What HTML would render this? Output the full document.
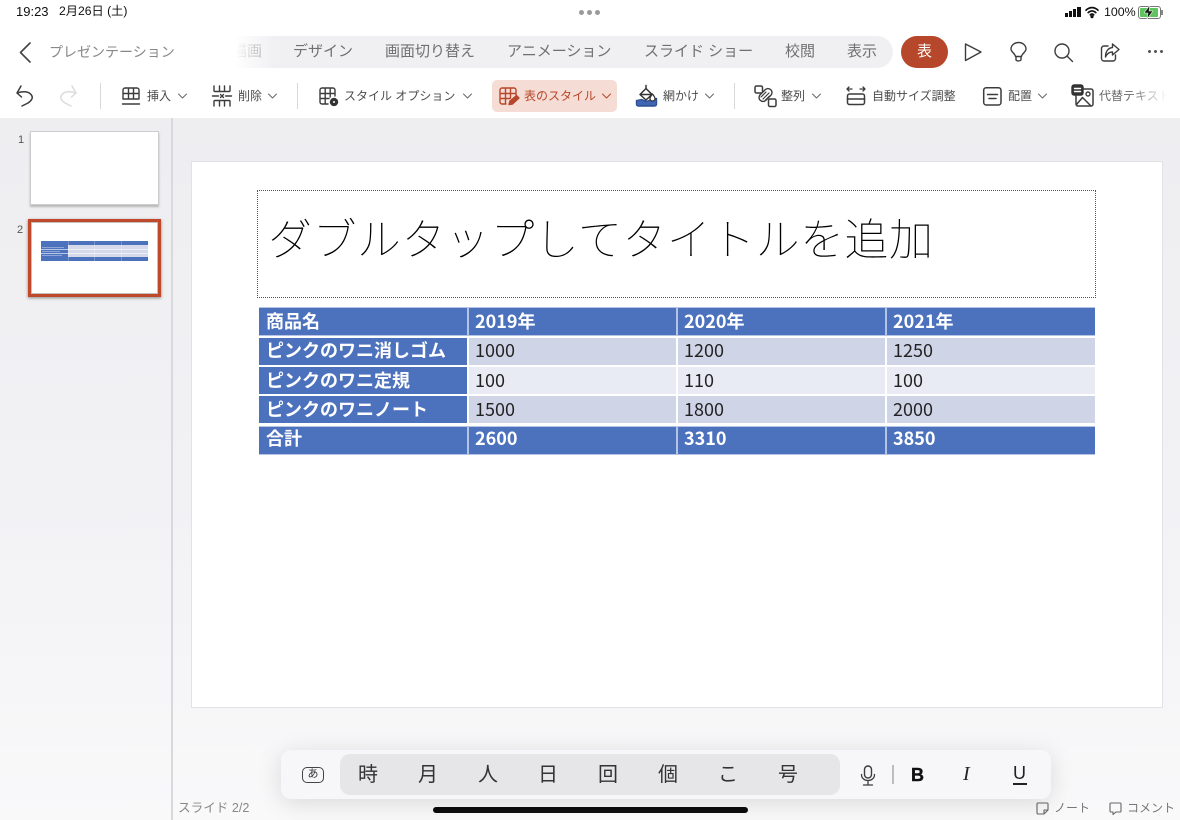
<!DOCTYPE html>
<html lang="ja"><head><meta charset="utf-8">
<style>
html,body{margin:0;padding:0}
body{width:1180px;height:820px;overflow:hidden;position:relative;background:linear-gradient(180deg,#fff 0,#fff 118px,#eeeef1 118px,#f2f2f5 500px,#f9f9fa 820px);font-family:"Liberation Sans","Noto Sans CJK JP",sans-serif;color:#333}
.a{position:absolute;white-space:nowrap}
svg{position:absolute;overflow:visible;fill:none;stroke:#3c3c3c;stroke-width:1.4;stroke-linecap:round;stroke-linejoin:round}
.tab{position:absolute;top:43px;font-size:15px;line-height:18px;color:#707070;white-space:nowrap}
.tb{position:absolute;top:88px;font-size:12px;line-height:16px;color:#4c4c4c;white-space:nowrap}
.c{position:absolute;height:27px;line-height:27px;font-size:18px;box-sizing:border-box;padding-left:7px;white-space:nowrap;font-family:"Noto Sans CJK JP","Liberation Sans",sans-serif}
.h{background:#4d72bd;color:#fff;font-weight:700}
.d1{background:#cfd4e7;color:#222}
.d2{background:#e8ebf4;color:#222}
.r2{line-height:25px}
.r4{line-height:26px}
.r5{line-height:23px}
.k{position:absolute;top:762px;font-size:20px;line-height:26px;color:#333;width:30px;text-align:center}
</style></head><body>

<div class="a" style="left:16px;top:3px;font-size:13px;line-height:17px;color:#111">19:23</div>
<div class="a" style="left:59px;top:3px;font-size:12.2px;line-height:17px;color:#111">2月26日 (土)</div>
<div class="a" style="left:579px;top:10px;width:5px;height:5px;border-radius:50%;background:#9a9a9a"></div>
<div class="a" style="left:587px;top:10px;width:5px;height:5px;border-radius:50%;background:#9a9a9a"></div>
<div class="a" style="left:595px;top:10px;width:5px;height:5px;border-radius:50%;background:#9a9a9a"></div>
<div class="a" style="left:1065px;top:13px;width:3px;height:4px;background:#111"></div>
<div class="a" style="left:1069px;top:11px;width:3px;height:6px;background:#111"></div>
<div class="a" style="left:1073px;top:9px;width:3px;height:8px;background:#111"></div>
<div class="a" style="left:1077px;top:7px;width:4px;height:10px;background:#111"></div>
<svg style="left:1085px;top:6px" width="14" height="12" viewBox="0 0 14 12"><path d="M1 4.200C4.500.8 9.500.8 13 4.200M3.200 6.600c2.400-2.200 5.200-2.200 7.600 0M5.300 8.800c1.100-1 2.300-1 3.400 0" stroke="#111" stroke-width="1.700"/><circle cx="7" cy="10.600" r=".9" fill="#111" stroke="#111"/></svg>
<div class="a" style="left:1104px;top:4px;font-size:12.4px;line-height:16px;color:#111">100%</div>
<div class="a" style="left:1138px;top:6px;width:21px;height:11px;border:1px solid #777;border-radius:3px"></div>
<div class="a" style="left:1140px;top:8px;width:18px;height:9px;background:#5fc45f;border-radius:1px"></div>
<div class="a" style="left:1161px;top:10px;width:2px;height:5px;background:#888"></div>
<svg style="left:1143px;top:5px" width="11" height="14" viewBox="0 0 11 14"><path d="M7 0L1 8h4l-1 6 6-8H6z" fill="#111" stroke="#fff" stroke-width=".6"/></svg>

<svg style="left:18px;top:42px" width="14" height="21" viewBox="0 0 14 21"><path d="M12 1L2.500 10.500 12 20" stroke="#444" stroke-width="1.600"/></svg>
<div class="a" style="left:49px;top:43px;font-size:14px;line-height:18px;color:#888">プレゼンテーション</div>

<div class="a" style="left:232px;top:36px;width:661px;height:32px;border-radius:0 16px 16px 0;background:#f0f0f3"></div>
<div class="tab" style="left:232px;color:#999">描画</div>
<div class="a" style="left:225px;top:36px;width:50px;height:32px;background:linear-gradient(90deg,#fff 0,#fff 20%,rgba(255,255,255,0) 100%)"></div>
<div class="tab" style="left:293px">デザイン</div>
<div class="tab" style="left:385px">画面切り替え</div>
<div class="tab" style="left:507px">アニメーション</div>
<div class="tab" style="left:644px">スライド ショー</div>
<div class="tab" style="left:785px">校閲</div>
<div class="tab" style="left:847px">表示</div>
<div class="a" style="left:901px;top:36px;width:47px;height:32px;border-radius:16px;background:#b7472a;color:#fff;font-size:15px;line-height:32px;text-align:center">表</div>

<svg style="left:964px;top:43px" width="18" height="18" viewBox="0 0 18 18"><path d="M1.500 1L17 9 1.500 17.500z" stroke-width="1.400"/></svg>
<svg style="left:1010px;top:42px" width="17" height="20" viewBox="0 0 17 20"><path d="M5.500 14.500C5 11.500 1 10 1 7a7.500 6.500 0 0 1 15 0c0 3-4 4.500-4.500 7.500zM5.500 14.500h6M6 18c1 1.300 4 1.300 5 0v-3.500M6 18v-3.500" stroke-width="1.400"/></svg>
<svg style="left:1054px;top:43px" width="19" height="19" viewBox="0 0 19 19"><circle cx="8" cy="8" r="7" stroke-width="1.400"/><path d="M13 13l5.500 5.500" stroke-width="1.400"/></svg>
<svg style="left:1100px;top:42px" width="20" height="20" viewBox="0 0 20 20"><path d="M8 4H4a2.500 2.500 0 0 0-2.500 2.500v10A2.500 2.500 0 0 0 4 19h9a2.500 2.500 0 0 0 2.500-2.500V13" stroke-width="1.400"/><path d="M12.500 2L19 7.500 12.500 13v-3C9 10 7 11.500 5.500 15c0-5.500 2.500-9 7-9.500z" stroke-width="1.400"/></svg>
<div class="a" style="left:1148px;top:50px;width:3px;height:3px;border-radius:50%;background:#555"></div>
<div class="a" style="left:1154px;top:50px;width:3px;height:3px;border-radius:50%;background:#555"></div>
<div class="a" style="left:1160px;top:50px;width:3px;height:3px;border-radius:50%;background:#555"></div>

<svg style="left:14px;top:85px" width="20" height="22" viewBox="0 0 20 22"><path d="M7 1L3 8l4.500 4M3 8C8 6.500 14 6 17 9.500 20 13 17 16 14 18L8 21" stroke-width="1.500"/></svg>
<svg style="left:59px;top:85px" width="20" height="22" viewBox="0 0 20 22"><path d="M13 1l4 7-4.500 4M17 8C12 6.500 6 6 3 9.500 0 13 3 16 6 18l6 3" stroke="#dcdcdc" stroke-width="1.500"/></svg>
<div class="a" style="left:100px;top:83px;width:1px;height:26px;background:#d8d8d8"></div>

<svg style="left:122px;top:87px" width="18" height="18" viewBox="0 0 18 18"><path d="M1 12V3a2 2 0 0 1 2-2h12a2 2 0 0 1 2 2v9zM1 6.500h16M6.500 1v11M11.500 1v11M0.500 17h17"/></svg>
<div class="tb" style="left:147px">挿入</div>
<svg style="left:178px;top:93px" width="9" height="6" viewBox="0 0 9 6"><path d="M.5 1l4 4 4-4" stroke="#666" stroke-width="1"/></svg>

<svg style="left:212px;top:86px" width="20" height="20" viewBox="0 0 20 20"><path d="M2 0v4.500a1 1 0 0 0 1 1h14a1 1 0 0 0 1-1V0M7.500 0v5.500M12.500 0v5.500M0.500 10h6M13.500 10h6M8.500 8.500l3 3M11.500 8.500l-3 3M2 20v-4.500a1 1 0 0 1 1-1h14a1 1 0 0 1 1 1V20M7.500 14.500V20M12.500 14.500V20"/></svg>
<div class="tb" style="left:238px">削除</div>
<svg style="left:268px;top:93px" width="9" height="6" viewBox="0 0 9 6"><path d="M.5 1l4 4 4-4" stroke="#666" stroke-width="1"/></svg>
<div class="a" style="left:297px;top:83px;width:1px;height:26px;background:#d8d8d8"></div>

<svg style="left:319px;top:87px" width="20" height="20" viewBox="0 0 20 20"><path d="M9 17H3a2 2 0 0 1-2-2V3a2 2 0 0 1 2-2h11a2 2 0 0 1 2 2v6M1 6.500h15M1 11.500h9M6.200 1v16M11.200 1v9"/><circle cx="15" cy="15" r="3" fill="#333" stroke="#333" stroke-width="2.400" stroke-dasharray="1.500 1.200"/><circle cx="15" cy="15" r="1" fill="#fff" stroke="none"/></svg>
<div class="tb" style="left:344px">スタイル オプション</div>
<svg style="left:463px;top:93px" width="9" height="6" viewBox="0 0 9 6"><path d="M.5 1l4 4 4-4" stroke="#666" stroke-width="1"/></svg>

<div class="a" style="left:492px;top:80px;width:125px;height:32px;border-radius:5px;background:#f5dcd4"></div>
<svg style="left:499px;top:87px" width="21" height="19" viewBox="0 0 21 19"><path d="M7 17H3a2 2 0 0 1-2-2V3a2 2 0 0 1 2-2h12a2 2 0 0 1 2 2v5M1 6.500h16M1 11.500h10M6.500 1v16M11.500 1v10" stroke="#b7472a"/><path d="M10 17.500l1-3.500 6.500-5.500 2.500 2.500-6.500 6z" fill="#b7472a" stroke="#b7472a"/></svg>
<div class="tb" style="left:524px;color:#b7472a">表のスタイル</div>
<svg style="left:602px;top:93px" width="9" height="6" viewBox="0 0 9 6"><path d="M.5 1l4 4 4-4" stroke="#b7472a" stroke-width="1"/></svg>

<svg style="left:636px;top:84px" width="21" height="23" viewBox="0 0 21 23"><path d="M.5 20.500a2 2 0 0 0 2 1.500h16a2 2 0 0 0 2-1.500v-6l-5 1-5 2-5-2-5 1z" fill="#3f66b5" stroke="#2f4f90"/><path d="M10 1.500v3M4 10.500l6-6 6 6-6 5.500z" fill="#fff" stroke="#333" stroke-width="1.500"/><path d="M5 10.500h10" stroke="#333"/><path d="M16.500 10c-2 2.500-2.500 3.500-2.500 4.500a2.500 2.500 0 0 0 5 0c0-1-.5-2-2.500-4.500z" fill="#fff" stroke="#333" stroke-width="1.300"/></svg>
<div class="tb" style="left:663px">網かけ</div>
<svg style="left:705px;top:93px" width="9" height="6" viewBox="0 0 9 6"><path d="M.5 1l4 4 4-4" stroke="#666" stroke-width="1"/></svg>
<div class="a" style="left:734px;top:83px;width:1px;height:26px;background:#d8d8d8"></div>

<svg style="left:754px;top:85px" width="23" height="22" viewBox="0 0 23 22"><rect x="1" y="1" width="7.500" height="7" rx="1.500" stroke-width="1.500"/><rect x="14.500" y="14" width="7.500" height="7.500" rx="1.500" stroke-width="1.500"/><rect x="4" y="6" width="15" height="8" rx="4" transform="rotate(-45 11.500 10)" fill="#fff" stroke-width="1.400"/><path d="M7 12l5-5M9 14l6-6M11.500 15l4-4" stroke-width="1.200"/></svg>
<div class="tb" style="left:781px">整列</div>
<svg style="left:812px;top:93px" width="9" height="6" viewBox="0 0 9 6"><path d="M.5 1l4 4 4-4" stroke="#666" stroke-width="1"/></svg>

<svg style="left:846px;top:86px" width="20" height="20" viewBox="0 0 20 20"><rect x="1.500" y="8" width="17" height="10.500" rx="2" stroke-width="1.500"/><path d="M1.500 13h17" stroke-width="1.500"/><path d="M1 3h5M3 1L1 3l2 2M14 3h5M17 1l2 2-2 2" stroke-width="1.300"/></svg>
<div class="tb" style="left:872px">自動サイズ調整</div>

<svg style="left:983px;top:87px" width="19" height="19" viewBox="0 0 19 19"><rect x=".7" y=".7" width="17.300" height="17.300" rx="2.500" stroke-width="1.500"/><path d="M4.500 7.500h10M6 11.500h7" stroke-width="1.500"/></svg>
<div class="tb" style="left:1008px">配置</div>
<svg style="left:1038px;top:93px" width="9" height="6" viewBox="0 0 9 6"><path d="M.5 1l4 4 4-4" stroke="#666" stroke-width="1"/></svg>

<svg style="left:1072px;top:85px" width="22" height="22" viewBox="0 0 22 22"><path d="M11 4h8a2 2 0 0 1 2 2v13a2 2 0 0 1-2 2H6a2 2 0 0 1-2-2v-8" stroke-width="1.500"/><path d="M4.500 19.500l6-7 8 8" stroke-width="1.500"/><circle cx="16" cy="9" r="2"/><rect x="0" y="0" width="11" height="10" rx="2" fill="#333" stroke="#333"/><path d="M2.500 3.500h6M2.500 6.500h6" stroke="#fff"/></svg>
<div class="tb" style="left:1099px;color:#666">代替テキスト</div>
<div class="a" style="left:1130px;top:84px;width:50px;height:24px;background:linear-gradient(90deg,rgba(255,255,255,0),#fff 75%)"></div>

<div class="a" style="left:171px;top:118px;width:2px;height:702px;background:#d9d9dd"></div>
<div class="a" style="left:18px;top:133px;font-size:11px;line-height:15px;color:#555">1</div>
<div class="a" style="left:31px;top:132px;width:127px;height:72px;background:#fff;box-shadow:0 0 0 1px #cdcdcd,0 2px 2px 1px #b5b5b5"></div>
<div class="a" style="left:17px;top:223px;font-size:11px;line-height:15px;color:#555">2</div>
<div class="a" style="left:28px;top:219px;width:133px;height:78px;box-sizing:border-box;background:#fff;border:3px solid #c0492c;box-shadow:0 1px 3px #888"></div>
<div class="a" style="left:31px;top:222px;width:127px;height:72px;box-sizing:border-box;border:1px solid #c0c0c0"></div>
<div class="a" style="left:41px;top:241px;width:107px;height:20px;background:#d5d9ea"></div>
<div class="a" style="left:41px;top:241px;width:107px;height:4px;background:#4d72bd"></div>
<div class="a" style="left:41px;top:245px;width:27px;height:12px;background:#4d72bd"></div>
<div class="a" style="left:41px;top:257px;width:107px;height:4px;background:#4d72bd"></div>
<div class="a" style="left:41px;top:249px;width:107px;height:1px;background:#fff;opacity:.6"></div>
<div class="a" style="left:41px;top:253px;width:107px;height:1px;background:#fff;opacity:.6"></div>
<div class="a" style="left:68px;top:241px;width:1px;height:20px;background:#fff;opacity:.25"></div>
<div class="a" style="left:94px;top:241px;width:1px;height:20px;background:#fff;opacity:.25"></div>
<div class="a" style="left:121px;top:241px;width:1px;height:20px;background:#fff;opacity:.25"></div>
<div class="a" style="left:42px;top:247px;width:22px;height:1px;background:#8fa5d6"></div>
<div class="a" style="left:42px;top:251px;width:18px;height:1px;background:#8fa5d6"></div>
<div class="a" style="left:42px;top:255px;width:20px;height:1px;background:#8fa5d6"></div>

<div class="a" style="left:192px;top:162px;width:970px;height:545px;background:#fff;box-shadow:0 0 0 1px #e2e2e4"></div>
<div class="a" style="left:257px;top:190px;width:839px;height:108px;box-sizing:border-box;border:1px dotted #555"></div>
<div class="a" style="left:268px;top:208px;font-size:44px;line-height:56px;font-weight:100;color:#000;letter-spacing:.45px;font-family:'Noto Sans CJK JP',sans-serif">ダブルタップしてタイトルを追加</div>

<div class="a" style="left:259px;top:307px;width:836px;height:29px;background:#b5c3e4"></div>
<div class="a" style="left:259px;top:426px;width:836px;height:29px;background:#b5c3e4"></div>

<div class="c h" style="left:259px;top:308px;width:208px">商品名</div>
<div class="c h" style="left:469px;top:308px;width:207px;padding-left:6px">2019年</div>
<div class="c h" style="left:678px;top:308px;width:207px;padding-left:6px">2020年</div>
<div class="c h" style="left:887px;top:308px;width:208px;padding-left:6px">2021年</div>

<div class="c h r2" style="left:259px;top:338px;width:208px">ピンクのワニ消しゴム</div>
<div class="c d1 r2" style="left:469px;top:338px;width:207px;padding-left:6px">1000</div>
<div class="c d1 r2" style="left:678px;top:338px;width:207px;padding-left:6px">1200</div>
<div class="c d1 r2" style="left:887px;top:338px;width:208px;padding-left:6px">1250</div>

<div class="c h" style="left:259px;top:367px;width:208px">ピンクのワニ定規</div>
<div class="c d2" style="left:469px;top:367px;width:207px;padding-left:6px">100</div>
<div class="c d2" style="left:678px;top:367px;width:207px;padding-left:6px">110</div>
<div class="c d2" style="left:887px;top:367px;width:208px;padding-left:6px">100</div>

<div class="c h r4" style="left:259px;top:396px;width:208px">ピンクのワニノート</div>
<div class="c d1 r4" style="left:469px;top:396px;width:207px;padding-left:6px">1500</div>
<div class="c d1 r4" style="left:678px;top:396px;width:207px;padding-left:6px">1800</div>
<div class="c d1 r4" style="left:887px;top:396px;width:208px;padding-left:6px">2000</div>

<div class="c h r5" style="left:259px;top:427px;width:208px">合計</div>
<div class="c h r5" style="left:469px;top:427px;width:207px;padding-left:6px">2600</div>
<div class="c h r5" style="left:678px;top:427px;width:207px;padding-left:6px">3310</div>
<div class="c h r5" style="left:887px;top:427px;width:208px;padding-left:6px">3850</div>

<div class="a" style="left:178px;top:800px;font-size:12.6px;line-height:16px;color:#888">スライド 2/2</div>
<svg style="left:1036px;top:802px" width="13" height="13" viewBox="0 0 13 13"><path d="M1 2a1 1 0 0 1 1-1h9a1 1 0 0 1 1 1v6l-4 4H2a1 1 0 0 1-1-1zM12 8H8v4" stroke="#666" stroke-width="1.100"/></svg>
<div class="a" style="left:1054px;top:800px;font-size:12px;line-height:16px;color:#777">ノート</div>
<svg style="left:1109px;top:802px" width="13" height="13" viewBox="0 0 13 13"><path d="M2 1h9a1 1 0 0 1 1 1v7a1 1 0 0 1-1 1H7l-3 2.500V10H2a1 1 0 0 1-1-1V2a1 1 0 0 1 1-1z" stroke="#666" stroke-width="1.100"/></svg>
<div class="a" style="left:1127px;top:800px;font-size:12px;line-height:16px;color:#777">コメント</div>

<div class="a" style="left:281px;top:750px;width:770px;height:49px;border-radius:10px;background:#f7f7f9;box-shadow:0 4px 24px rgba(0,0,0,.13)"></div>
<div class="a" style="left:340px;top:754px;width:500px;height:41px;border-radius:10px;background:#e6e6e8"></div>
<div class="a" style="left:302px;top:767px;width:22px;height:16px;box-sizing:border-box;border:1.300px solid #444;border-radius:5px;font-size:11px;line-height:13px;text-align:center;color:#333">あ</div>
<div class="k" style="left:353px">時</div>
<div class="k" style="left:413px">月</div>
<div class="k" style="left:473px">人</div>
<div class="k" style="left:533px">日</div>
<div class="k" style="left:593px">回</div>
<div class="k" style="left:653px">個</div>
<div class="k" style="left:713px">こ</div>
<div class="k" style="left:773px">号</div>
<svg style="left:860px;top:765px" width="16" height="21" viewBox="0 0 16 21"><rect x="4.500" y="1" width="7" height="12" rx="3.500"/><path d="M1.500 9.500c0 8 13 8 13 0M8 16v3.500M3.500 20h9" stroke-width="1.300"/></svg>
<div class="a" style="left:892px;top:765px;width:2px;height:19px;background:#bdbdbd"></div>
<div class="a" style="left:911px;top:763px;font-size:18px;line-height:24px;font-weight:700;color:#111;-webkit-text-stroke:.4px #111">B</div>
<div class="a" style="left:963px;top:762px;font-size:20px;line-height:24px;font-style:italic;color:#222;font-family:'Liberation Serif',serif">I</div>
<div class="a" style="left:1013px;top:763px;font-size:18px;line-height:20px;color:#222">U</div>
<div class="a" style="left:1013px;top:783px;width:14px;height:1.500px;background:#222"></div>

<div class="a" style="left:433px;top:807px;width:315px;height:6px;border-radius:3px;background:#0a0a0a"></div>
</body></html>
